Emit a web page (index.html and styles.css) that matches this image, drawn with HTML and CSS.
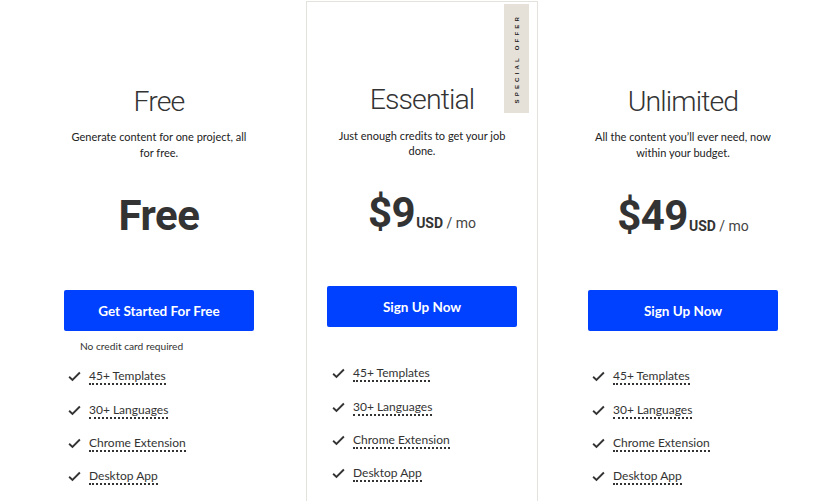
FILE: index.html
```html
<!DOCTYPE html>
<html lang="en">
<head>
<meta charset="utf-8">
<title>Pricing</title>
<link rel="stylesheet" href="styles.css">
</head>
<body>
<div class="plans">
  <div class="plan">
    <h2 class="plan-name">Free</h2>
    <p class="plan-desc">Generate content for one project, all for free.</p>
    <div class="price"><span class="amount">Free</span></div>
    <a class="btn" href="#">Get Started For Free</a>
    <div class="note">No credit card required</div>
    <ul class="features">
      <li><svg class="check" viewBox="0 0 14 11"><path d="M1.2 5.8 L4.8 9.2 L12.8 1.2" /></svg><span>45+ Templates</span></li>
      <li><svg class="check" viewBox="0 0 14 11"><path d="M1.2 5.8 L4.8 9.2 L12.8 1.2" /></svg><span>30+ Languages</span></li>
      <li><svg class="check" viewBox="0 0 14 11"><path d="M1.2 5.8 L4.8 9.2 L12.8 1.2" /></svg><span>Chrome Extension</span></li>
      <li><svg class="check" viewBox="0 0 14 11"><path d="M1.2 5.8 L4.8 9.2 L12.8 1.2" /></svg><span>Desktop App</span></li>
    </ul>
  </div>
  <div class="plan featured">
    <div class="badge"><span>SPECIAL OFFER</span></div>
    <h2 class="plan-name">Essential</h2>
    <p class="plan-desc">Just enough credits to get your job done.</p>
    <div class="price"><span class="amount">$9</span><span class="unit"><b>USD</b> / mo</span></div>
    <a class="btn" href="#">Sign Up Now</a>
    <div class="note"></div>
    <ul class="features">
      <li><svg class="check" viewBox="0 0 14 11"><path d="M1.2 5.8 L4.8 9.2 L12.8 1.2" /></svg><span>45+ Templates</span></li>
      <li><svg class="check" viewBox="0 0 14 11"><path d="M1.2 5.8 L4.8 9.2 L12.8 1.2" /></svg><span>30+ Languages</span></li>
      <li><svg class="check" viewBox="0 0 14 11"><path d="M1.2 5.8 L4.8 9.2 L12.8 1.2" /></svg><span>Chrome Extension</span></li>
      <li><svg class="check" viewBox="0 0 14 11"><path d="M1.2 5.8 L4.8 9.2 L12.8 1.2" /></svg><span>Desktop App</span></li>
    </ul>
  </div>
  <div class="plan">
    <h2 class="plan-name">Unlimited</h2>
    <p class="plan-desc">All the content you’ll ever need, now within your budget.</p>
    <div class="price"><span class="amount">$49</span><span class="unit"><b>USD</b> / mo</span></div>
    <a class="btn" href="#">Sign Up Now</a>
    <div class="note"></div>
    <ul class="features">
      <li><svg class="check" viewBox="0 0 14 11"><path d="M1.2 5.8 L4.8 9.2 L12.8 1.2" /></svg><span>45+ Templates</span></li>
      <li><svg class="check" viewBox="0 0 14 11"><path d="M1.2 5.8 L4.8 9.2 L12.8 1.2" /></svg><span>30+ Languages</span></li>
      <li><svg class="check" viewBox="0 0 14 11"><path d="M1.2 5.8 L4.8 9.2 L12.8 1.2" /></svg><span>Chrome Extension</span></li>
      <li><svg class="check" viewBox="0 0 14 11"><path d="M1.2 5.8 L4.8 9.2 L12.8 1.2" /></svg><span>Desktop App</span></li>
    </ul>
  </div>
</div>
</body>
</html>
```

FILE: styles.css
```css
html, body {
  margin: 0;
  padding: 0;
  background: #ffffff;
  overflow: hidden;
}
body {
  font-family: Lato, "Noto Sans", sans-serif;
  color: #333333;
}
.plans {
  display: flex;
  align-items: flex-start;
  gap: 30px;
  padding-left: 43px;
}
.plan {
  position: relative;
  width: 232px;
  min-height: 520px;
  box-sizing: border-box;
  padding-top: 84px;
  text-align: center;
}
.plan.featured {
  margin: 1px -1px 0 1px;
  padding-top: 80px;
  border: 1px solid #e4e2dd;
}
.badge {
  position: absolute;
  top: 2px;
  right: 8px;
  width: 25px;
  height: 109px;
  background: #e6e1d8;
  display: flex;
  align-items: center;
  justify-content: center;
}
.badge span {
  writing-mode: vertical-rl;
  transform: rotate(180deg);
  font-family: "Liberation Sans", sans-serif;
  font-size: 6px;
  font-weight: bold;
  letter-spacing: 3.2px;
  color: #222;
}
.plan-name {
  margin: 0;
  font-family: Roboto, "Liberation Sans", sans-serif;
  font-weight: 300;
  font-size: 28.5px;
  line-height: 36px;
  letter-spacing: -0.9px;
  color: #333;
}
.plan-desc {
  margin: 9px auto 0;
  max-width: 186px;
  font-size: 11px;
  line-height: 16px;
  color: #222;
}
.featured .plan-desc {
  line-height: 15px;
  margin-top: 10px;
}
.price {
  height: 129px;
  box-sizing: border-box;
  padding-top: 30px;
  display: flex;
  align-items: flex-start;
  justify-content: center;
}
.featured .price {
  height: 128px;
}
.amount {
  font-family: Roboto, "Liberation Sans", sans-serif;
  font-weight: 700;
  font-size: 42px;
  line-height: 50px;
  letter-spacing: -0.5px;
  color: #333;
}
.unit {
  font-family: Roboto, "Liberation Sans", sans-serif;
  font-size: 14px;
  line-height: 14px;
  margin-top: 28px;
  margin-left: 1px;
  color: #444;
}
.unit b {
  font-weight: 700;
  color: #333;
}
.btn {
  display: flex;
  align-items: center;
  justify-content: center;
  width: 190px;
  height: 41px;
  margin: 0 auto;
  background: #0040ff;
  color: #ffffff;
  font-size: 13.5px;
  font-weight: 700;
  text-decoration: none;
  border-radius: 2px;
}
.note {
  height: 21px;
  box-sizing: border-box;
  padding-top: 9px;
  padding-left: 37px;
  text-align: left;
  font-size: 10.2px;
  line-height: 12px;
  color: #333;
}
.features {
  list-style: none;
  margin: 8px 0 0;
  padding: 0 0 0 25px;
  text-align: left;
}
.featured .features {
  margin-top: 9px;
}
.features li {
  display: flex;
  align-items: center;
  height: 33.4px;
}
.check {
  width: 13px;
  height: 11px;
  margin-right: 8px;
  fill: none;
  stroke: #333;
  stroke-width: 2;
}
.features span {
  font-size: 12px;
  line-height: 15px;
  border-bottom: 2px dotted #333;
  color: #333;
}
```
